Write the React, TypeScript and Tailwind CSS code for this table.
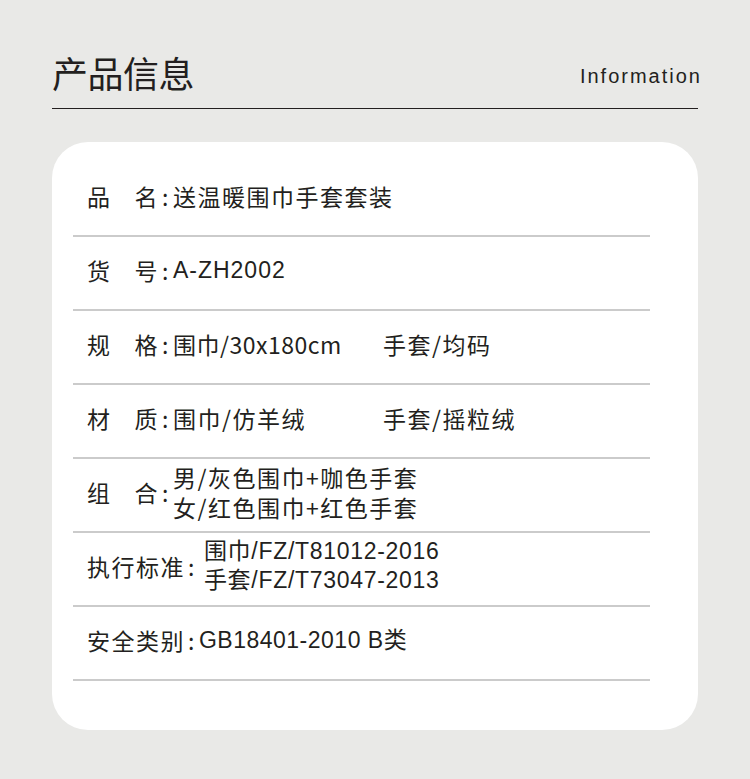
const cjk = "font-['Noto_Sans_CJK_SC',sans-serif]";
const mixed = "font-['Liberation_Sans','Noto_Sans_CJK_SC',sans-serif]";

function Label({ a, b }: { a: string; b: string }) {
  return (
    <span className={`flex w-[72px] justify-between ${cjk}`}>
      <span>{a}</span>
      <span>{b}</span>
    </span>
  );
}

function Row({ children }: { children: React.ReactNode }) {
  return (
    <div className="flex h-[74px] items-center border-b-2 border-[#cbcbcb] pb-[6px] pl-[14px]">
      {children}
    </div>
  );
}

function Colon() {
  return <span className={`mx-[3px] ${cjk}`}>:</span>;
}

export default function App() {
  return (
    <div className="h-[779px] w-[750px] bg-[#e9e9e7] px-[52px] pt-[54px] text-[#231f20]">
      <div className="flex items-end justify-between border-b border-[#231f20] pb-[18px]">
        <h1 className={`text-[36px] leading-none tracking-[-0.5px] ${cjk}`}>产品信息</h1>
        <span className="mb-[4px] mr-[-4px] font-['Liberation_Sans',Arial,sans-serif] text-[20px] leading-none tracking-[2px]">
          Information
        </span>
      </div>

      <div className="mt-[33px] h-[588px] rounded-[36px] bg-white pt-[21px]">
        <div className="ml-[21px] w-[577px] text-[23px] leading-[29px] tracking-[1.5px]">
          <Row>
            <Label a="品" b="名" />
            <Colon />
            <span className={cjk}>送温暖围巾手套套装</span>
          </Row>
          <Row>
            <Label a="货" b="号" />
            <Colon />
            <span className={`tracking-[1px] ${mixed}`}>A-ZH2002</span>
          </Row>
          <Row>
            <Label a="规" b="格" />
            <Colon />
            <span className={`w-[210px] tracking-[0.5px] ${cjk}`}>围巾/30x180cm</span>
            <span className={cjk}>手套/均码</span>
          </Row>
          <Row>
            <Label a="材" b="质" />
            <Colon />
            <span className={`w-[210px] ${cjk}`}>围巾/仿羊绒</span>
            <span className={cjk}>手套/摇粒绒</span>
          </Row>
          <Row>
            <Label a="组" b="合" />
            <Colon />
            <div className={`flex flex-col leading-[30px] ${cjk}`}>
              <span>男/灰色围巾+咖色手套</span>
              <span>女/红色围巾+红色手套</span>
            </div>
          </Row>
          <Row>
            <span className={`tracking-[1.5px] ${cjk}`}>执行标准</span>
            <Colon />
            <div className={`ml-[5px] flex flex-col leading-[29px] tracking-[0.7px] ${mixed}`}>
              <span>围巾/FZ/T81012-2016</span>
              <span>手套/FZ/T73047-2013</span>
            </div>
          </Row>
          <Row>
            <span className={`tracking-[1.5px] ${cjk}`}>安全类别</span>
            <Colon />
            <span className={`tracking-[0.5px] ${mixed}`}>GB18401-2010 B类</span>
          </Row>
        </div>
      </div>
    </div>
  );
}
